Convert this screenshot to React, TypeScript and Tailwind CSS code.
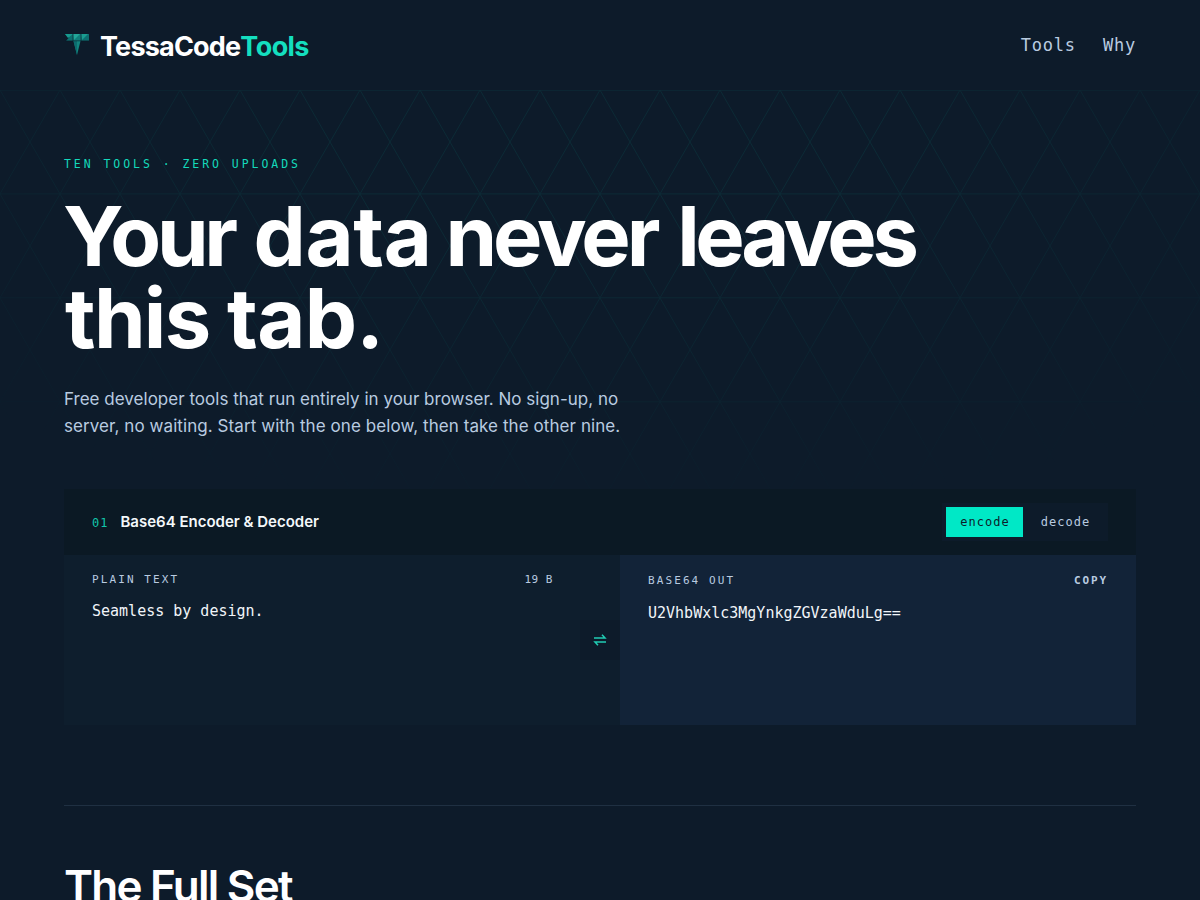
import React from "react";

const LATTICE_COLUMNS = Array.from({ length: 28 }, (_, i) => (i - 4) * 60);
const LATTICE_ROWS = [0.2, 103.9, 207.8, 311.8];

const Lattice: React.FC = () => (
  <svg
    className="pointer-events-none absolute inset-x-0 top-0 h-[416px] w-full"
    viewBox="0 0 1200 416"
    fill="none"
    stroke="#00e5c3"
    strokeWidth="1"
    aria-hidden="true"
  >
    <defs>
      <radialGradient
        id="fade"
        gradientUnits="userSpaceOnUse"
        cx="0"
        cy="0"
        r="1"
        gradientTransform="translate(600 40) scale(940 400)"
      >
        <stop offset="0" stopColor="#fff" />
        <stop offset="0.3" stopColor="#fff" />
        <stop offset="1" stopColor="#fff" stopOpacity="0" />
      </radialGradient>
      <mask id="lattice-mask" maskUnits="userSpaceOnUse" x="0" y="0" width="1200" height="416">
        <rect width="1200" height="416" stroke="none" fill="url(#fade)" />
      </mask>
    </defs>
    <g mask="url(#lattice-mask)" opacity="0.075">
      {LATTICE_ROWS.map((y) => (
        <path key={y} d={`M0 ${y}H1200`} />
      ))}
      {LATTICE_COLUMNS.map((x) => (
        <path key={x} d={`M${x} 0l240 415.7M${x} 0l-240 415.7`} />
      ))}
    </g>
  </svg>
);

const Logo: React.FC = () => (
  <svg width="26" height="26" viewBox="0 0 26 26" aria-hidden="true">
    <path d="M1 2h8v7H2l3-3.500z" fill="#0c6f70" />
    <path d="M1 2h8l-5 4z" fill="#179b90" />
    <path d="M9 2h8v7H9z" fill="#107f7b" />
    <path d="M9 2h7l-6 6z" fill="#22a699" />
    <path d="M17 2h8v7h-8z" fill="#0c6f70" />
    <path d="M17 2h7l-6 6z" fill="#1a9c90" />
    <path d="M9.500 9h7l-3.500 14z" fill="#12857f" />
    <path d="M9.500 9H13v14z" fill="#0c6c6e" />
    <path d="M1 8.800h24M9 2v7M17 2v7" stroke="#0d1b2a" strokeWidth="0.600" />
  </svg>
);

const Header: React.FC = () => (
  <header className="flex h-[90px] items-center justify-between px-16">
    <div className="flex items-center gap-[10px]">
      <Logo />
      <span className="pt-0.5 font-['Inter',sans-serif] text-[27px] font-bold leading-none tracking-[-0.8px] text-white">
        TessaCode<span className="tracking-[-0.6px] text-[#14dfbf]">Tools</span>
      </span>
    </div>
    <nav className="flex gap-[27px] pt-0.5 font-['DejaVu_Sans_Mono',monospace] text-[17px] tracking-[0.8px] text-[#b9cbe0]">
      <span>Tools</span>
      <span>Why</span>
    </nav>
  </header>
);

const Hero: React.FC = () => (
  <div>
    <p className="relative top-px font-['DejaVu_Sans_Mono',monospace] text-[11.5px] leading-[18px] tracking-[2.95px] text-[#14d9bb]">
      TEN TOOLS · ZERO UPLOADS
    </p>
    <h1 className="mt-[23px] whitespace-nowrap font-['Inter',sans-serif] text-[83px] font-bold leading-[82px] tracking-[-3px] text-white">
      <span className="-ml-px tracking-[-4.3px]">Your</span>{" "}
      <span className="ml-[3px] tracking-[-0.3px]">data</span>{" "}
      <span className="-ml-[3px] tracking-[-4px]">never</span>{" "}
      <span className="ml-1 tracking-[-4.4px]">leaves</span>
      <br />
      <span className="ml-px tracking-[-1.7px]">this</span>{" "}
      <span className="ml-px tracking-[-0.7px]">tab.</span>
    </h1>
    <p className="mt-[27px] whitespace-nowrap font-['Inter',sans-serif] text-[17px] leading-[27px] text-[#b9cbe0]">
      <span className="tracking-[0.015px]">
        Free developer tools that run entirely in your browser. No sign-up, no
      </span>
      <br />
      <span className="tracking-[0.075px]">
        server, no waiting. Start with the one below, then take the other nine.
      </span>
    </p>
  </div>
);

const Encoder: React.FC = () => (
  <section className="mt-[49px]">
    <div className="flex h-[66px] items-center justify-between bg-[#0b1924] px-7">
      <div className="flex items-center gap-3">
        <span className="pt-px font-['DejaVu_Sans_Mono',monospace] text-xs tracking-[1px] text-[#12c4aa]">01</span>
        <span className="font-['Inter',sans-serif] text-[15px] font-semibold text-[#f4f8fb]">
          Base64 Encoder &amp; Decoder
        </span>
      </div>
      <div className="flex bg-[#0d1b2a] p-1 font-['DejaVu_Sans_Mono',monospace] text-xs tracking-[1px]">
        <button className="h-[30px] w-[77px] bg-[#00e8c6] pl-px text-[#0d1b2a]">encode</button>
        <button className="h-[30px] w-[81px] pl-1 text-[#b9cbe0]">decode</button>
      </div>
    </div>
    <div className="relative flex h-[170px] font-['DejaVu_Sans_Mono',monospace]">
      <div className="w-[556px] bg-[#0e1e2d] pl-7 pr-[67px] pt-[17px]">
        <div className="flex justify-between text-[11px] leading-4 text-[#b9cbe0]">
          <span className="tracking-[2.1px]">PLAIN TEXT</span>
          <span className="tracking-[0.5px]">19 B</span>
        </div>
        <p className="mt-[11px] text-[15px] leading-6 text-[#f1f5f9]">Seamless by design.</p>
      </div>
      <div className="flex-1 bg-[#122338] px-7 pt-[18px]">
        <div className="flex justify-between text-[11px] leading-4 text-[#b9cbe0]">
          <span className="tracking-[2.1px]">BASE64 OUT</span>
          <span className="font-bold tracking-[1.9px]">COPY</span>
        </div>
        <p className="mt-3 text-[15px] leading-6 text-[#f1f5f9]">U2VhbWxlc3MgYnkgZGVzaWduLg==</p>
      </div>
      <div className="absolute left-[516px] top-[65px] flex h-10 w-10 items-center justify-center bg-[#0d1b2a]">
        <svg width="14" height="12" viewBox="0 0 14 12" fill="none" stroke="#20cdb4" strokeWidth="1.5">
          <path d="M1 4h11L9 0.800M13 8H2l3 3.200" />
        </svg>
      </div>
    </div>
  </section>
);

export default function App() {
  return (
    <div className="h-[900px] overflow-hidden bg-[#0d1b2a]">
      <Header />
      <main className="relative px-16 pt-16">
        <Lattice />
        <div className="relative">
          <Hero />
          <Encoder />
          <div className="mt-20 border-t border-[#1f3042] pt-[54px]">
            <h2 className="font-['Inter',sans-serif] text-[44px] font-semibold leading-[52px] tracking-[-1.75px] text-white">
              The Full Set
            </h2>
          </div>
        </div>
      </main>
    </div>
  );
}
